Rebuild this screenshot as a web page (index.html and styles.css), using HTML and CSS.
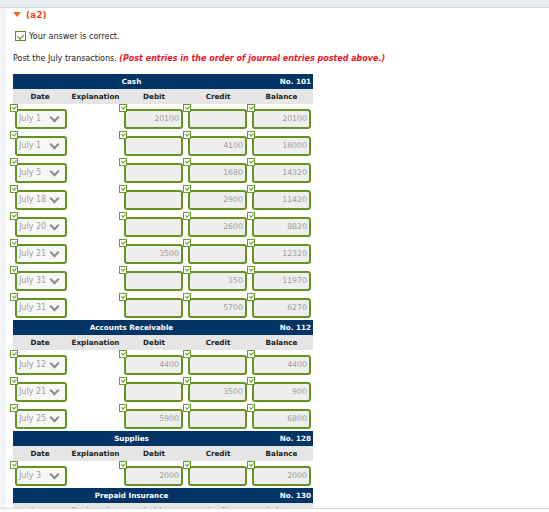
FILE: index.html
```html
<!DOCTYPE html>
<html>
<head>
	<title>ledger</title>
	<meta charset="utf-8">
	<link rel="stylesheet" href="styles.css">
</head>
<body>
	<div class="topbar"></div>
	<div class="page">
		<div class="part"><span class="part__arrow"></span>(a2)</div>
		<div class="result"><span class="result__box"></span>Your answer is correct.</div>
		<div class="task">Post the July transactions. <span class="task__note">(Post entries in the order of journal entries posted above.)</span></div>

		<!-- Cash -->
		<div class="ledger">
			<div class="ledger__title"><span class="ledger__name">Cash</span><span class="ledger__no">No. 101</span></div>
			<div class="ledger__cols"><span>Date</span><span>Explanation</span><span>Debit</span><span>Credit</span><span>Balance</span></div>
			<div class="ledger__row">
				<div class="cell"><span class="mark"></span><div class="select">July 1</div></div>
				<div class="cell"></div>
				<div class="cell"><span class="mark"></span><div class="field">20100</div></div>
				<div class="cell"><span class="mark"></span><div class="field"></div></div>
				<div class="cell"><span class="mark"></span><div class="field">20100</div></div>
			</div>
			<div class="ledger__row">
				<div class="cell"><span class="mark"></span><div class="select">July 1</div></div>
				<div class="cell"></div>
				<div class="cell"><span class="mark"></span><div class="field"></div></div>
				<div class="cell"><span class="mark"></span><div class="field">4100</div></div>
				<div class="cell"><span class="mark"></span><div class="field">16000</div></div>
			</div>
			<div class="ledger__row">
				<div class="cell"><span class="mark"></span><div class="select">July 5</div></div>
				<div class="cell"></div>
				<div class="cell"><span class="mark"></span><div class="field"></div></div>
				<div class="cell"><span class="mark"></span><div class="field">1680</div></div>
				<div class="cell"><span class="mark"></span><div class="field">14320</div></div>
			</div>
			<div class="ledger__row">
				<div class="cell"><span class="mark"></span><div class="select">July 18</div></div>
				<div class="cell"></div>
				<div class="cell"><span class="mark"></span><div class="field"></div></div>
				<div class="cell"><span class="mark"></span><div class="field">2900</div></div>
				<div class="cell"><span class="mark"></span><div class="field">11420</div></div>
			</div>
			<div class="ledger__row">
				<div class="cell"><span class="mark"></span><div class="select">July 20</div></div>
				<div class="cell"></div>
				<div class="cell"><span class="mark"></span><div class="field"></div></div>
				<div class="cell"><span class="mark"></span><div class="field">2600</div></div>
				<div class="cell"><span class="mark"></span><div class="field">8820</div></div>
			</div>
			<div class="ledger__row">
				<div class="cell"><span class="mark"></span><div class="select">July 21</div></div>
				<div class="cell"></div>
				<div class="cell"><span class="mark"></span><div class="field">3500</div></div>
				<div class="cell"><span class="mark"></span><div class="field"></div></div>
				<div class="cell"><span class="mark"></span><div class="field">12320</div></div>
			</div>
			<div class="ledger__row">
				<div class="cell"><span class="mark"></span><div class="select">July 31</div></div>
				<div class="cell"></div>
				<div class="cell"><span class="mark"></span><div class="field"></div></div>
				<div class="cell"><span class="mark"></span><div class="field">350</div></div>
				<div class="cell"><span class="mark"></span><div class="field">11970</div></div>
			</div>
			<div class="ledger__row">
				<div class="cell"><span class="mark"></span><div class="select">July 31</div></div>
				<div class="cell"></div>
				<div class="cell"><span class="mark"></span><div class="field"></div></div>
				<div class="cell"><span class="mark"></span><div class="field">5700</div></div>
				<div class="cell"><span class="mark"></span><div class="field">6270</div></div>
			</div>
		</div>

		<!-- Accounts Receivable -->
		<div class="ledger">
			<div class="ledger__title"><span class="ledger__name">Accounts Receivable</span><span class="ledger__no">No. 112</span></div>
			<div class="ledger__cols"><span>Date</span><span>Explanation</span><span>Debit</span><span>Credit</span><span>Balance</span></div>
			<div class="ledger__row">
				<div class="cell"><span class="mark"></span><div class="select">July 12</div></div>
				<div class="cell"></div>
				<div class="cell"><span class="mark"></span><div class="field">4400</div></div>
				<div class="cell"><span class="mark"></span><div class="field"></div></div>
				<div class="cell"><span class="mark"></span><div class="field">4400</div></div>
			</div>
			<div class="ledger__row">
				<div class="cell"><span class="mark"></span><div class="select">July 21</div></div>
				<div class="cell"></div>
				<div class="cell"><span class="mark"></span><div class="field"></div></div>
				<div class="cell"><span class="mark"></span><div class="field">3500</div></div>
				<div class="cell"><span class="mark"></span><div class="field">900</div></div>
			</div>
			<div class="ledger__row">
				<div class="cell"><span class="mark"></span><div class="select">July 25</div></div>
				<div class="cell"></div>
				<div class="cell"><span class="mark"></span><div class="field">5900</div></div>
				<div class="cell"><span class="mark"></span><div class="field"></div></div>
				<div class="cell"><span class="mark"></span><div class="field">6800</div></div>
			</div>
		</div>

		<!-- Supplies -->
		<div class="ledger">
			<div class="ledger__title"><span class="ledger__name">Supplies</span><span class="ledger__no">No. 128</span></div>
			<div class="ledger__cols"><span>Date</span><span>Explanation</span><span>Debit</span><span>Credit</span><span>Balance</span></div>
			<div class="ledger__row">
				<div class="cell"><span class="mark"></span><div class="select">July 3</div></div>
				<div class="cell"></div>
				<div class="cell"><span class="mark"></span><div class="field">2000</div></div>
				<div class="cell"><span class="mark"></span><div class="field"></div></div>
				<div class="cell"><span class="mark"></span><div class="field">2000</div></div>
			</div>
		</div>

		<!-- Prepaid Insurance -->
		<div class="ledger">
			<div class="ledger__title"><span class="ledger__name">Prepaid Insurance</span><span class="ledger__no">No. 130</span></div>
			<div class="ledger__cols"><span>Date</span><span>Explanation</span><span>Debit</span><span>Credit</span><span>Balance</span></div>
		</div>
	</div>
	<div class="bottombar"></div>
</body>
</html>
```

FILE: styles.css
```css
html, body {
	height: 100%;
	overflow: hidden;
}
body {
	margin: 0;
	background: #f3f5f8;
	font-family: "DejaVu Sans", Verdana, sans-serif;
	font-size: 8px;
	color: #222;
}
.topbar {
	height: 7px;
	background: #e9edf1;
	border-bottom: 1px solid #d3d8dd;
}
.page {
	margin-left: 6px;
	background: #fff;
	padding: 0 7px;
	height: calc(100% - 8px);
	overflow: hidden;
}

/* heading of the part */
.part {
	display: flex;
	align-items: center;
	gap: 5px;
	height: 13px;
	color: #de4f1c;
	font-weight: bold;
	font-size: 9px;
}
.part__arrow {
	width: 0;
	height: 0;
	border-left: 4.5px solid transparent;
	border-right: 4.5px solid transparent;
	border-top: 5px solid #f0661f;
}
.result {
	display: flex;
	align-items: center;
	gap: 3px;
	height: 10px;
	margin: 10px 0 0 2px;
}
.result__box {
	position: relative;
	box-sizing: border-box;
	width: 11px;
	height: 10px;
	border: 1px solid #5b8a2b;
}
.result__box:after {
	content: '';
	position: absolute;
	left: 2.5px;
	top: 1px;
	width: 2.5px;
	height: 4.5px;
	border-right: 1.2px solid #5b8a2b;
	border-bottom: 1.2px solid #5b8a2b;
	transform: rotate(45deg);
}
.task {
	height: 10px;
	line-height: 10px;
	margin-top: 13px;
}
.task__note {
	color: #f0141e;
	font-weight: bold;
	font-style: italic;
}

/* ledger tables */
.ledger {
	width: 300px;
	margin-top: 10px;
}
.ledger + .ledger {
	margin-top: 0;
}
.ledger__title {
	display: grid;
	grid-template-columns: 237px 63px;
	height: 15px;
	line-height: 15px;
	background: #023466;
	color: #fff;
	font-weight: bold;
	font-size: 7.2px;
}
.ledger__name {
	text-align: center;
}
.ledger__no {
	text-align: right;
	padding-right: 2px;
}
.ledger__cols, .ledger__row {
	display: grid;
	grid-template-columns: 56px 53px 64px 64px 63px;
}
.ledger__cols {
	height: 15px;
	line-height: 15px;
	background: #e5e5e5;
	font-weight: bold;
	font-size: 7.2px;
	text-align: center;
}
.ledger__cols span:nth-child(1) {
	padding-right: 2px;
}
.ledger__row {
	height: 27px;
}
.cell {
	position: relative;
	padding: 5px 0 0 2px;
}
.mark {
	position: absolute;
	left: -3px;
	top: 0;
	box-sizing: border-box;
	width: 8px;
	height: 8px;
	background: #fff;
	border: 1px solid #6b9a2c;
	z-index: 1;
}
.mark:after {
	content: '';
	position: absolute;
	left: 1.5px;
	top: 0;
	width: 1.5px;
	height: 3px;
	border-right: 1px solid #6b9a2c;
	border-bottom: 1px solid #6b9a2c;
	transform: rotate(45deg);
}
.select, .field {
	box-sizing: border-box;
	height: 20px;
	line-height: 16px;
	border: 2px solid #66921f;
	border-radius: 3px;
	color: #9c9c9c;
}
.select {
	position: relative;
	width: 52px;
	padding-left: 2px;
	background: #f7f7f7;
	font-size: 8px;
}
.select:after {
	content: '';
	position: absolute;
	right: 7px;
	top: 3px;
	width: 5px;
	height: 5px;
	border-right: 2px solid #8a8a8a;
	border-bottom: 2px solid #8a8a8a;
	transform: rotate(45deg);
}
.field {
	width: 59px;
	padding-right: 2px;
	background: #eeeeee;
	text-align: right;
	font-size: 7.8px;
}
.bottombar {
	position: fixed;
	left: 0;
	right: 0;
	top: 508px;
	height: 4px;
	border-top: 1.5px solid #dcdcdc;
	background: #fff;
}
```
